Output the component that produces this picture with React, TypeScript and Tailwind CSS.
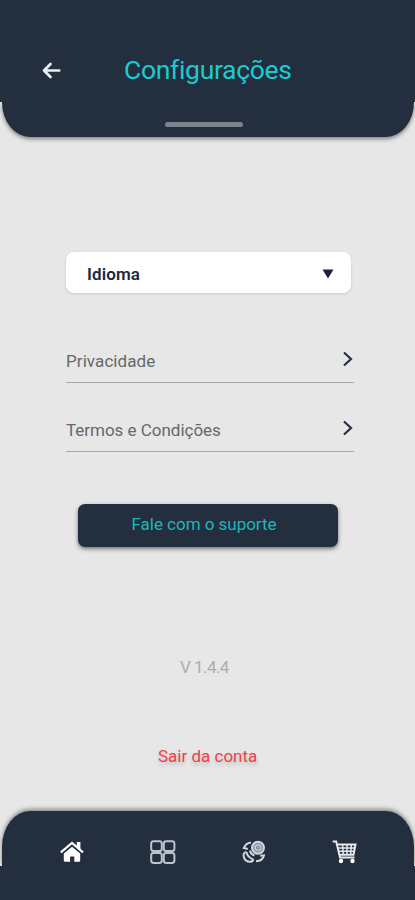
import type { ReactNode } from "react";

function Chevron() {
  return (
    <svg width="12" height="18" viewBox="0 0 12 18" fill="none">
      <path d="M2 2.5 9 9l-7 6.5" stroke="#263043" strokeWidth="2.2" />
    </svg>
  );
}

function Row({ children }: { children: ReactNode }) {
  return (
    <div className="flex h-[33px] w-[288px] items-start justify-between border-b border-[#a9a9ab]">
      {children}
      <Chevron />
    </div>
  );
}

function HomeIcon() {
  return (
    <svg width="24" height="24" viewBox="0 0 24 24" fill="#fff">
      <path d="M3.8 13.6 12 6.7l8.2 6.9V20.5q0 1.3-1.3 1.3h-4.6v-5.4h-4.2v5.4H5.1q-1.3 0-1.3-1.3Z" />
      <path d="M.8 12.4 12 2.9l11 9.5" fill="none" stroke="#fff" strokeWidth="2.1" />
      <path d="M16.8 2h3.6v8l-3.6-3.4Z" />
    </svg>
  );
}

function GridIcon() {
  return (
    <svg width="26" height="24" viewBox="0 0 26 24" fill="none" stroke="#bdc3cd" strokeWidth="2">
      <rect x="1.2" y="1.2" width="10.6" height="9.9" rx="2.4" />
      <rect x="13.8" y="1.2" width="10.6" height="9.9" rx="2.4" />
      <rect x="1.2" y="13" width="10.6" height="9.9" rx="2.4" />
      <rect x="13.8" y="13" width="10.6" height="9.9" rx="2.4" />
    </svg>
  );
}

function ExchangeIcon() {
  return (
    <svg width="24" height="24" viewBox="0 0 24 24" fill="none" stroke="#d2d6dc" strokeWidth="2">
      <path d="M2 8.5C3 4.5 5.5 3 9 2.6M.8 7.8l5 1.2" />
      <path d="M4.5 12c-2.5.3-3.3 2.2-2.8 4.5.6 2.9 3 5 5.7 5.3 2 .2 3.5-.7 4-2.4M4.5 12c.3 3 2.4 5.6 7 7.6M8 10.5c.3 2.3 1.8 4 4.5 5" />
      <path d="M14 21.2c4 0 7.2-2 8-5.9l-3.8.5" />
      <circle cx="16" cy="7.7" r="6" fill="#929aa5" />
      <circle cx="16" cy="7.7" r="2.5" fill="#566170" strokeWidth="1.3" />
      <circle cx="16" cy="7.7" r=".9" fill="#d2d6dc" stroke="none" />
    </svg>
  );
}

function CartIcon() {
  return (
    <svg width="25" height="24" viewBox="0 0 25 24" fill="none" stroke="#e6e9ed" strokeWidth="2">
      <path d="M.7 1.6h3.5L8 17.5h14.5M5 4.5h18.5l-2 10.2H7.2" />
      <path d="M5.6 8h17M6.5 11.3h15.3M10.5 4.5l.8 10.2M15 4.5v10.2M19.4 4.5l-.8 10.2" strokeWidth="1.5" />
      <circle cx="9" cy="21" r="2.2" fill="#fff" stroke="none" />
      <circle cx="20.5" cy="21" r="2.2" fill="#fff" stroke="none" />
    </svg>
  );
}

export default function App() {
  return (
    <div className="flex h-[900px] w-[415px] flex-col overflow-hidden bg-[#e7e7e7] font-['Roboto',sans-serif]">
      <header className="flex h-[137px] shrink-0 flex-col">
        <div className="z-10 flex h-[102px] items-start bg-[#232e3f] pt-[51px]">
          <svg width="20" height="18" viewBox="0 0 20 18" className="ml-[42px] mt-[10px]" fill="none" stroke="#e9edf3" strokeWidth="2.7" strokeLinecap="round" strokeLinejoin="round">
            <path d="M17.3 9.5H2M8.5 3 2 9.5 8.5 16" />
          </svg>
          <h1 className="ml-[62px] whitespace-nowrap text-[26.5px] leading-[38px] tracking-[-0.31px] text-[#1bcbd0]">Configurações</h1>
        </div>
        <div className="ml-[2px] mr-px h-[35px] rounded-b-[28px_35px] bg-[#232e3f] pt-5 shadow-[0_2px_4px_rgba(0,0,0,0.45)]">
          <div className="ml-[163px] h-[5px] w-[78px] rounded-full bg-[#7b838d]" />
        </div>
      </header>

      <main className="flex flex-1 flex-col">
        <button className="ml-[66px] mt-[115px] flex h-[41px] w-[285px] items-center justify-between rounded-[8px] bg-white pl-[21px] pr-[17px] shadow-[0_1px_3px_rgba(0,0,0,0.13)]">
          <span className="pt-[3px] text-[17px] font-semibold leading-5 tracking-[0.1px] text-[#20283a]">Idioma</span>
          <svg width="12" height="10" viewBox="0 0 12 10" className="mt-[3px]">
            <path d="M.5.5h11L6 9.5Z" fill="#17203c" />
          </svg>
        </button>

        <div className="ml-[66px] mt-[57px] flex flex-col gap-9">
          <Row>
            <span className="text-[17px] leading-[22px] tracking-[0.08px] text-[#65676b]">Privacidade</span>
          </Row>
          <Row>
            <span className="text-[17px] leading-[22px] tracking-[-0.02px] text-[#65676b]">Termos e Condições</span>
          </Row>
        </div>

        <button className="ml-[78px] mt-[52px] flex h-[43px] w-[260px] items-center justify-center rounded-[7px] bg-[#232e3f] pb-[2px] pr-[8px] text-[17px] tracking-[-0.03px] text-[#20b6bc] shadow-[0_2px_4px_rgba(0,0,0,0.5)]">
          <span>Fale com o suporte</span>
        </button>

        <p className="ml-[180px] mt-[109px] text-[17px] leading-[22px] tracking-[-0.55px] text-[#adadad]">V 1.4.4</p>
        <button className="ml-[158px] mt-[67px] self-start text-[17px] leading-[22px] tracking-[0px] text-[#ee4248] [text-shadow:0_3px_4px_rgba(0,0,0,0.2)]">Sair da conta</button>
      </main>

      <nav className="flex h-[89px] shrink-0 flex-col">
        <div className="ml-[2px] mr-px flex h-[55px] items-start rounded-t-[28px_36px] bg-[#232e3f] pl-[58px] pt-[29px] shadow-[0_-2px_4px_rgba(0,0,0,0.42)]">
          <HomeIcon />
          <span className="ml-[66px]"><GridIcon /></span>
          <span className="ml-[66px]"><ExchangeIcon /></span>
          <span className="ml-[66px]"><CartIcon /></span>
        </div>
        <div className="z-10 flex-1 bg-[#232e3f]" />
      </nav>
    </div>
  );
}
